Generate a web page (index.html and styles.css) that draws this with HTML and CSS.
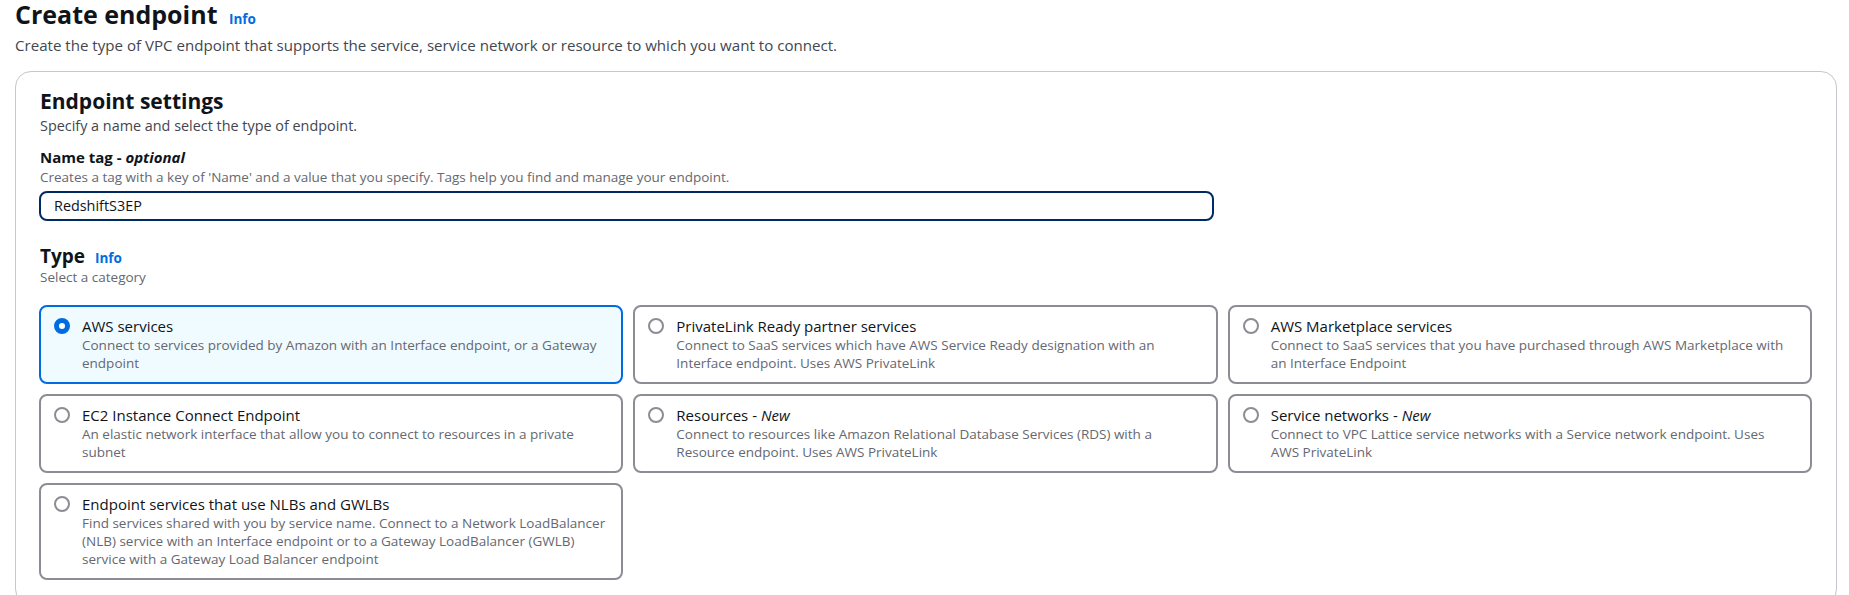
FILE: index.html
```html
<!DOCTYPE html>
<html lang="en">
<head>
<meta charset="utf-8">
<title>Create endpoint</title>
<link rel="stylesheet" href="styles.css">
</head>
<body>
<header class="page-header">
  <h1 class="page-title">Create endpoint <a class="info" href="#">Info</a></h1>
  <p class="page-desc">Create the type of VPC endpoint that supports the service, service network or resource to which you want to connect.</p>
</header>
<section class="panel">
  <h2 class="panel-title">Endpoint settings</h2>
  <p class="panel-desc">Specify a name and select the type of endpoint.</p>

  <div class="field">
    <label class="field-label" for="name">Name tag - <i>optional</i></label>
    <p class="field-desc">Creates a tag with a key of 'Name' and a value that you specify. Tags help you find and manage your endpoint.</p>
    <input class="text-input" id="name" type="text" value="RedshiftS3EP">
  </div>

  <div class="type-block">
    <h3 class="type-title">Type <a class="info" href="#">Info</a></h3>
    <p class="field-desc">Select a category</p>
  </div>

  <div class="tiles">
    <div class="tile selected">
      <span class="radio on"></span>
      <div class="tile-body">
        <div class="tile-title">AWS services</div>
        <div class="tile-desc">Connect to services provided by Amazon with an Interface endpoint, or a Gateway endpoint</div>
      </div>
    </div>
    <div class="tile">
      <span class="radio"></span>
      <div class="tile-body">
        <div class="tile-title">PrivateLink Ready partner services</div>
        <div class="tile-desc">Connect to SaaS services which have AWS Service Ready designation with an Interface endpoint. Uses AWS PrivateLink</div>
      </div>
    </div>
    <div class="tile">
      <span class="radio"></span>
      <div class="tile-body">
        <div class="tile-title">AWS Marketplace services</div>
        <div class="tile-desc">Connect to SaaS services that you have purchased through AWS Marketplace with an Interface Endpoint</div>
      </div>
    </div>
    <div class="tile">
      <span class="radio"></span>
      <div class="tile-body">
        <div class="tile-title">EC2 Instance Connect Endpoint</div>
        <div class="tile-desc">An elastic network interface that allow you to connect to resources in a private subnet</div>
      </div>
    </div>
    <div class="tile">
      <span class="radio"></span>
      <div class="tile-body">
        <div class="tile-title">Resources - <i>New</i></div>
        <div class="tile-desc">Connect to resources like Amazon Relational Database Services (RDS) with a Resource endpoint. Uses AWS PrivateLink</div>
      </div>
    </div>
    <div class="tile">
      <span class="radio"></span>
      <div class="tile-body">
        <div class="tile-title">Service networks - <i>New</i></div>
        <div class="tile-desc">Connect to VPC Lattice service networks with a Service network endpoint. Uses AWS PrivateLink</div>
      </div>
    </div>
    <div class="tile">
      <span class="radio"></span>
      <div class="tile-body">
        <div class="tile-title">Endpoint services that use NLBs and GWLBs</div>
        <div class="tile-desc">Find services shared with you by service name. Connect to a Network LoadBalancer (NLB) service with an Interface endpoint or to a Gateway LoadBalancer (GWLB) service with a Gateway Load Balancer endpoint</div>
      </div>
    </div>
  </div>
</section>
</body>
</html>
```

FILE: styles.css
```css
* { box-sizing: border-box; }

html, body {
  margin: 0;
  background: #ffffff;
}

body {
  padding: 0 12px 0 15px;
  font-family: "Open Sans", "Noto Sans", sans-serif;
  color: #0f141a;
  overflow: hidden;
}

p { margin: 0; }

.page-title {
  margin: 0;
  font-size: 25px;
  line-height: 28px;
  font-weight: 700;
  color: #0f141a;
}

.info {
  font-size: 13.5px;
  line-height: 1;
  font-weight: 700;
  color: #006ce0;
  text-decoration: none;
  margin-left: 5px;
}

.page-desc {
  margin-top: 6.5px;
  font-size: 15.1px;
  line-height: 20px;
  color: #424650;
}

.panel {
  margin-top: 16px;
  border: 1px solid #c6c6cd;
  border-radius: 16px;
  padding: 16px 24px 24px 23px;
}

.panel-title {
  margin: 0 0 0 1px;
  font-size: 21px;
  line-height: 26px;
  font-weight: 700;
}

.panel-desc {
  margin: 2px 0 0 1px;
  font-size: 14.4px;
  line-height: 20px;
  color: #424650;
}

.field {
  margin-top: 11px;
  display: flex;
  flex-direction: column;
  align-items: flex-start;
}

.field-label {
  margin-left: 1px;
  font-size: 15px;
  line-height: 20px;
  font-weight: 700;
  color: #0f141a;
}

.field-label i {
  font-style: italic;
}

.field-desc {
  margin-left: 1px;
  font-size: 13.5px;
  line-height: 17px;
  color: #656871;
}

.field .field-desc {
  margin-top: 2px;
}

.text-input {
  margin-top: 5px;
  width: 1175px;
  height: 30px;
  border: 2px solid #002a64;
  border-radius: 8px;
  padding: 0 13px;
  font-family: "Open Sans", "Noto Sans", sans-serif;
  font-size: 14.4px;
  color: #0f141a;
  background: #ffffff;
  outline: none;
}

.type-block {
  margin-top: 23px;
}

.type-block .field-desc {
  margin-top: 1px;
}

.type-title {
  margin: 0 0 0 1px;
  font-size: 19px;
  line-height: 24px;
  font-weight: 700;
}

.type-title .info {
  margin-left: 5px;
}

.tiles {
  margin-top: 19px;
  display: grid;
  grid-template-columns: repeat(3, 1fr);
  column-gap: 10px;
  row-gap: 10px;
  align-items: start;
}

.tile {
  display: flex;
  align-items: flex-start;
  gap: 12px;
  border: 2px solid #8c8c94;
  border-radius: 8px;
  padding: 9px 16px 10px 13px;
  background: #ffffff;
  min-height: 79px;
}

.tile.selected {
  border-color: #006ce0;
  background: #f0fbff;
}

.radio {
  flex: none;
  width: 16px;
  height: 16px;
  margin-top: 2px;
  border: 2px solid #8c8c94;
  border-radius: 50%;
  background: #ffffff;
}

.radio.on {
  border: 5px solid #006ce0;
}

.tile-body {
  min-width: 0;
}

.tile-title {
  font-size: 15px;
  line-height: 20px;
  color: #0f141a;
}

.tile-desc {
  font-size: 13.5px;
  line-height: 18px;
  color: #656871;
}
```
